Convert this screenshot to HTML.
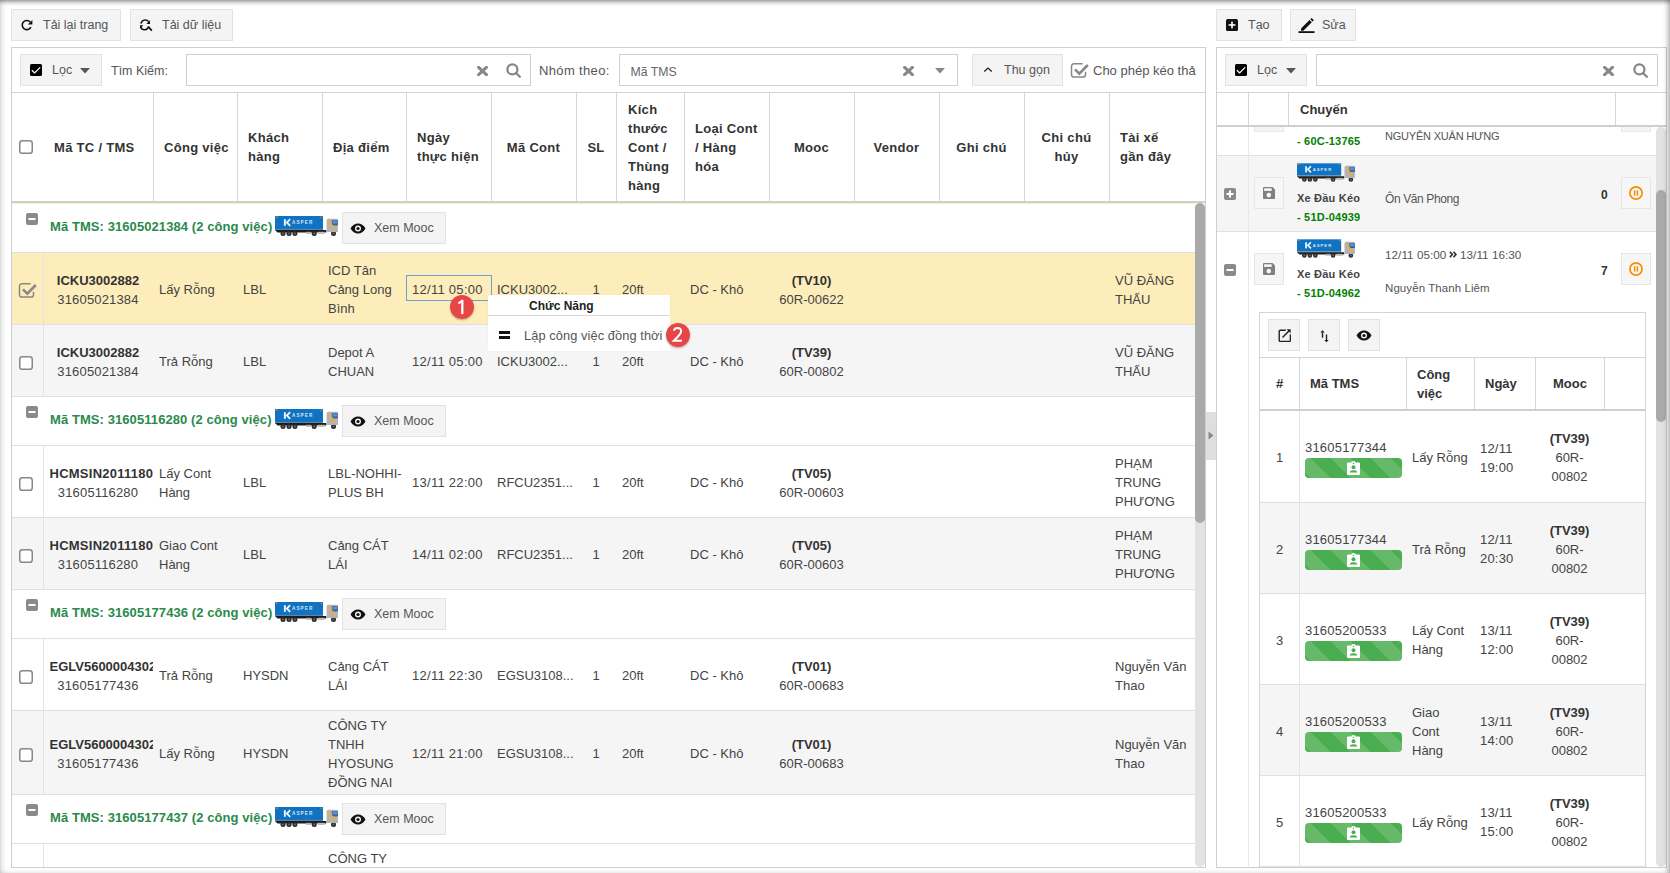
<!DOCTYPE html>
<html><head><meta charset="utf-8"><style>
html,body{margin:0;padding:0;}
body{width:1670px;height:873px;overflow:hidden;position:relative;background:#fff;font-family:"Liberation Sans", sans-serif;}
.t{position:absolute;white-space:nowrap;}
.b{position:absolute;}
</style></head><body>
<div class="b" style="left:11px;top:9px;width:110px;height:32px;background:#f4f4f4;border:1px solid #e2e2e2;box-sizing:border-box;"></div><svg class="b" style="left:21px;top:19px" width="13" height="13" viewBox="0 0 13 13"><path d="M9.9 8.2A4.6 4.6 0 1 1 9.2 2.9" fill="none" stroke="#111" stroke-width="1.6"/><path d="M11.4 1v4.6H6.8z" fill="#111"/></svg><div class="t" style="left:43px;top:15.5px;font-size:12.5px;line-height:19px;color:#555;">Tải lại trang</div><div class="b" style="left:130px;top:9px;width:103px;height:32px;background:#f4f4f4;border:1px solid #e2e2e2;box-sizing:border-box;"></div><svg class="b" style="left:139px;top:19px" width="14" height="13" viewBox="0 0 14 13"><path d="M2 4.6A4.3 4.3 0 0 1 9.6 2.6" fill="none" stroke="#111" stroke-width="1.5"/><path d="M11 1.2V5H7.3z" fill="#111"/><path d="M1 6.3h3.4L1 9.8z" fill="#111"/><path d="M1.8 8.4A4 4 0 0 0 9.4 7.6" fill="none" stroke="#111" stroke-width="1.5"/><path d="M9.2 7.6l3.6 4" stroke="#111" stroke-width="1.7"/></svg><div class="t" style="left:162px;top:15.5px;font-size:12.5px;line-height:19px;color:#555;">Tải dữ liệu</div><div class="b" style="left:1216px;top:9px;width:66px;height:32px;background:#f4f4f4;border:1px solid #e2e2e2;box-sizing:border-box;"></div><svg class="b" style="left:1226px;top:19px" width="12" height="12" viewBox="0 0 12 12"><rect x="0" y="0" width="12" height="12" rx="1.5" fill="#111"/><rect x="2.6" y="5.2" width="6.8" height="1.6" fill="#fff"/><rect x="5.2" y="2.6" width="1.6" height="6.8" fill="#fff"/></svg><div class="t" style="left:1248px;top:15.5px;font-size:12.5px;line-height:19px;color:#555;">Tạo</div><div class="b" style="left:1290px;top:9px;width:66px;height:32px;background:#f4f4f4;border:1px solid #e2e2e2;box-sizing:border-box;"></div><svg class="b" style="left:1298px;top:17px" width="17" height="16" viewBox="0 0 17 16"><path d="M3 11.5l8.5-8.5 2.3 2.3-8.5 8.5H3z" fill="#111"/><path d="M12.3 2.2l1.3-1.3 2.3 2.3-1.3 1.3z" fill="#111"/><rect x="0.5" y="14.2" width="16" height="1.8" fill="#111"/></svg><div class="t" style="left:1322px;top:15.5px;font-size:12.5px;line-height:19px;color:#555;">Sửa</div><div class="b" style="left:11px;top:47px;width:1195px;height:821px;border:1px solid #cfcfcf;box-sizing:border-box;background:#fff"></div><div class="b" style="left:20px;top:54px;width:82px;height:32px;background:#f4f4f4;border:1px solid #e2e2e2;box-sizing:border-box;"></div><svg class="b" style="left:30px;top:64px" width="12" height="12" viewBox="0 0 12 12"><rect x="0" y="0" width="12" height="12" rx="1.5" fill="#000"/><path d="M1.8 6.2L4.6 8.9L10.2 3.4" fill="none" stroke="#fff" stroke-width="1.3"/></svg><div class="t" style="left:52px;top:60.5px;font-size:12.5px;line-height:19px;color:#555;">Lọc</div><svg class="b" style="left:80px;top:68px" width="10" height="6" viewBox="0 0 10 6"><path d="M0 0h10L5 5.5z" fill="#555"/></svg><div class="t" style="left:111px;top:61.5px;font-size:12.5px;line-height:19px;color:#555;">Tìm Kiếm:</div><div class="b" style="left:186px;top:54px;width:345px;height:32px;border:1px solid #cfcfcf;box-sizing:border-box;background:#fff"></div><svg class="b" style="left:477px;top:66px" width="11" height="10" viewBox="0 0 11 10"><path d="M1.6 1.4l7.8 7.2M9.4 1.4l-7.8 7.2" stroke="#888" stroke-width="3.1" stroke-linecap="round"/></svg><svg class="b" style="left:506px;top:63px" width="15" height="15" viewBox="0 0 15 15"><circle cx="6.4" cy="6.4" r="5" fill="none" stroke="#888" stroke-width="2.3"/><path d="M10 10l3.8 3.8" stroke="#888" stroke-width="2.3" stroke-linecap="round"/></svg><div class="t" style="left:539px;top:60.5px;font-size:13px;line-height:19px;color:#555;letter-spacing:0.35px;">Nhóm theo:</div><div class="b" style="left:619px;top:54px;width:339px;height:32px;border:1px solid #cfcfcf;box-sizing:border-box;background:#fff"></div><div class="t" style="left:630.5px;top:62.5px;font-size:12.3px;line-height:19px;color:#666;">Mã TMS</div><svg class="b" style="left:903px;top:66px" width="11" height="10" viewBox="0 0 11 10"><path d="M1.6 1.4l7.8 7.2M9.4 1.4l-7.8 7.2" stroke="#888" stroke-width="3.1" stroke-linecap="round"/></svg><svg class="b" style="left:935px;top:68px" width="10" height="6" viewBox="0 0 10 6"><path d="M0 0h10L5 5.5z" fill="#888"/></svg><div class="b" style="left:972px;top:54px;width:91px;height:32px;background:#f4f4f4;border:1px solid #e2e2e2;box-sizing:border-box;"></div><svg class="b" style="left:983px;top:66px" width="10" height="7" viewBox="0 0 10 7"><path d="M1.3 5.5L5 2.1L8.7 5.5" fill="none" stroke="#222" stroke-width="1.35"/></svg><div class="t" style="left:1004px;top:60.5px;font-size:12.5px;line-height:19px;color:#555;">Thu gọn</div><svg class="b" style="left:1070px;top:62px" width="20" height="16" viewBox="0 0 20 16"><path d="M12.6 1.85H3.9a2.4 2.4 0 0 0-2.4 2.4v8.4a2.4 2.4 0 0 0 2.4 2.4h9.2a2.4 2.4 0 0 0 2.4-2.4V9.8" fill="none" stroke="#888" stroke-width="1.5"/><path d="M5 7.4L9.3 11.6L17.8 3" fill="none" stroke="#888" stroke-width="2.6"/></svg><div class="t" style="left:1093px;top:60.5px;font-size:13px;line-height:19px;color:#555;">Cho phép kéo thả</div><div class="b" style="left:12px;top:92px;width:1193px;height:1px;background:#d4d4d4"></div><div class="b" style="left:153px;top:93px;width:1px;height:108px;background:#d6d6d6"></div><div class="b" style="left:237px;top:93px;width:1px;height:108px;background:#d6d6d6"></div><div class="b" style="left:322px;top:93px;width:1px;height:108px;background:#d6d6d6"></div><div class="b" style="left:406px;top:93px;width:1px;height:108px;background:#d6d6d6"></div><div class="b" style="left:491px;top:93px;width:1px;height:108px;background:#d6d6d6"></div><div class="b" style="left:576px;top:93px;width:1px;height:108px;background:#d6d6d6"></div><div class="b" style="left:616px;top:93px;width:1px;height:108px;background:#d6d6d6"></div><div class="b" style="left:684px;top:93px;width:1px;height:108px;background:#d6d6d6"></div><div class="b" style="left:769px;top:93px;width:1px;height:108px;background:#d6d6d6"></div><div class="b" style="left:854px;top:93px;width:1px;height:108px;background:#d6d6d6"></div><div class="b" style="left:939px;top:93px;width:1px;height:108px;background:#d6d6d6"></div><div class="b" style="left:1024px;top:93px;width:1px;height:108px;background:#d6d6d6"></div><div class="b" style="left:1109px;top:93px;width:1px;height:108px;background:#d6d6d6"></div><div class="b" style="left:12px;top:201px;width:1193px;height:2px;background:#cfcfcf"></div><div class="b" style="left:12px;top:203px;width:1183px;height:1px;background:#fbeebf"></div><svg class="b" style="left:19px;top:140px" width="14" height="14" viewBox="0 0 14 14"><rect x="0.75" y="0.75" width="12.5" height="12.5" rx="2.6" fill="#fff" stroke="#888" stroke-width="1.5"/></svg><div class="t" style="left:54px;top:137.5px;font-size:13px;line-height:19px;color:#333;font-weight:bold;letter-spacing:0.3px;">Mã TC / TMS</div><div class="t" style="left:164px;top:137.5px;font-size:13px;line-height:19px;color:#333;font-weight:bold;letter-spacing:0.3px;">Công việc</div><div class="t" style="left:248px;top:127.5px;font-size:13px;line-height:19px;color:#333;font-weight:bold;letter-spacing:0.3px;">Khách</div><div class="t" style="left:248px;top:146.5px;font-size:13px;line-height:19px;color:#333;font-weight:bold;letter-spacing:0.3px;">hàng</div><div class="t" style="left:333px;top:137.5px;font-size:13px;line-height:19px;color:#333;font-weight:bold;letter-spacing:0.3px;">Địa điểm</div><div class="t" style="left:417px;top:127.5px;font-size:13px;line-height:19px;color:#333;font-weight:bold;letter-spacing:0.3px;">Ngày</div><div class="t" style="left:417px;top:146.5px;font-size:13px;line-height:19px;color:#333;font-weight:bold;letter-spacing:0.3px;">thực hiện</div><div class="t" style="left:491px;width:85px;text-align:center;top:137.5px;font-size:13px;line-height:19px;color:#333;font-weight:bold;letter-spacing:0.3px;">Mã Cont</div><div class="t" style="left:576px;width:40px;text-align:center;top:137.5px;font-size:13px;line-height:19px;color:#333;font-weight:bold;letter-spacing:0.3px;">SL</div><div class="t" style="left:628px;top:99.5px;font-size:13px;line-height:19px;color:#333;font-weight:bold;letter-spacing:0.3px;">Kích</div><div class="t" style="left:628px;top:118.5px;font-size:13px;line-height:19px;color:#333;font-weight:bold;letter-spacing:0.3px;">thước</div><div class="t" style="left:628px;top:137.5px;font-size:13px;line-height:19px;color:#333;font-weight:bold;letter-spacing:0.3px;">Cont /</div><div class="t" style="left:628px;top:156.5px;font-size:13px;line-height:19px;color:#333;font-weight:bold;letter-spacing:0.3px;">Thùng</div><div class="t" style="left:628px;top:175.5px;font-size:13px;line-height:19px;color:#333;font-weight:bold;letter-spacing:0.3px;">hàng</div><div class="t" style="left:695px;top:118.5px;font-size:13px;line-height:19px;color:#333;font-weight:bold;letter-spacing:0.3px;">Loại Cont</div><div class="t" style="left:695px;top:137.5px;font-size:13px;line-height:19px;color:#333;font-weight:bold;letter-spacing:0.3px;">/ Hàng</div><div class="t" style="left:695px;top:156.5px;font-size:13px;line-height:19px;color:#333;font-weight:bold;letter-spacing:0.3px;">hóa</div><div class="t" style="left:769px;width:85px;text-align:center;top:137.5px;font-size:13px;line-height:19px;color:#333;font-weight:bold;letter-spacing:0.3px;">Mooc</div><div class="t" style="left:854px;width:85px;text-align:center;top:137.5px;font-size:13px;line-height:19px;color:#333;font-weight:bold;letter-spacing:0.3px;">Vendor</div><div class="t" style="left:939px;width:85px;text-align:center;top:137.5px;font-size:13px;line-height:19px;color:#333;font-weight:bold;letter-spacing:0.3px;">Ghi chú</div><div class="t" style="left:1024px;width:85px;text-align:center;top:127.5px;font-size:13px;line-height:19px;color:#333;font-weight:bold;letter-spacing:0.3px;">Chi chú</div><div class="t" style="left:1024px;width:85px;text-align:center;top:146.5px;font-size:13px;line-height:19px;color:#333;font-weight:bold;letter-spacing:0.3px;">hủy</div><div class="t" style="left:1120px;top:127.5px;font-size:13px;line-height:19px;color:#333;font-weight:bold;letter-spacing:0.3px;">Tài xế</div><div class="t" style="left:1120px;top:146.5px;font-size:13px;line-height:19px;color:#333;font-weight:bold;letter-spacing:0.3px;">gần đây</div><svg class="b" style="left:26px;top:213px" width="12" height="12" viewBox="0 0 12 12"><rect x="0" y="0" width="12" height="12" rx="2" fill="#8a8a8a"/><rect x="2.5" y="5" width="7" height="2" fill="#fff"/></svg><div class="t" style="left:50px;top:216.5px;font-size:13px;line-height:19px;color:#2a8a4c;font-weight:bold;letter-spacing:0.08px;">Mã TMS: 31605021384 (2 công việc)</div><svg class="b" style="left:275px;top:216px" width="63" height="21" viewBox="0 0 63 21">
<rect x="0" y="0" width="48" height="13" fill="#0f72c3"/>
<rect x="0" y="12.9" width="48" height="1.3" fill="#5a86ae"/>
<rect x="0.8" y="0.6" width="1.8" height="1.2" fill="#b8a040"/><rect x="45.4" y="0.6" width="1.8" height="1.2" fill="#8aa040"/>
<path d="M40 2L34 12.5" stroke="#6aa060" stroke-width="0.35" opacity="0.6"/>
<rect x="8.9" y="3.2" width="1.9" height="6.6" fill="#f2f7fc"/>
<path d="M15.2 3.2L11.8 6.5L15.2 9.8" fill="none" stroke="#f2f7fc" stroke-width="1.8"/>
<text x="17" y="7.9" font-family="Liberation Sans" font-size="4.6" font-weight="bold" fill="#d6e6f5" letter-spacing="1.1">ASPER</text>
<path d="M0 14.1h51.3v2.3H2.5z" fill="#1c1c1c"/>
<rect x="31" y="15.8" width="5" height="2" fill="#b0b0b0"/>
<rect x="42.8" y="15.8" width="7" height="2.2" fill="#c0c0c0"/>
<g fill="#2b2b2b"><circle cx="8" cy="17.6" r="2.5"/><circle cx="14" cy="17.6" r="2.5"/><circle cx="19.9" cy="17.6" r="2.5"/><circle cx="39.2" cy="17.6" r="2.5"/><circle cx="58.5" cy="17.6" r="2.5"/></g>
<g fill="#6a6a6a"><circle cx="8" cy="17.6" r="1"/><circle cx="14" cy="17.6" r="1"/><circle cx="19.9" cy="17.6" r="1"/><circle cx="39.2" cy="17.6" r="1"/><circle cx="58.5" cy="17.6" r="1"/></g>
<path d="M51.6 4.5q0-1.8 1.8-1.8h8.3q1.2 0 1.2 1.2v12h-11.3z" fill="#b3b3b3"/>
<path d="M56.8 4.2h6v5.2h-6z" fill="#2f5fb0"/>
<path d="M57.5 4.8h4.5v2.8h-4.5z" fill="#5a8ed8"/>
<path d="M54.2 4.5q1.5 4 5.8 8.3" fill="none" stroke="#f0b020" stroke-width="1.7"/>
</svg><div class="b" style="left:342px;top:212px;width:104px;height:32px;background:#f4f4f4;border:1px solid #e2e2e2;box-sizing:border-box;"></div><svg class="b" style="left:350px;top:223px" width="16" height="11" viewBox="0 0 16 11"><path d="M0.5 5.5C2.5 2 5 0.5 8 0.5s5.5 1.5 7.5 5c-2 3.5-4.5 5-7.5 5S2.5 9 0.5 5.5z" fill="#111"/><circle cx="8" cy="5.5" r="3" fill="#f4f4f4"/><circle cx="8" cy="5.5" r="1.6" fill="#111"/></svg><div class="t" style="left:374px;top:218.5px;font-size:12.5px;line-height:19px;color:#555;">Xem Mooc</div><div class="b" style="left:12px;top:252px;width:1183px;height:1px;background:#e0e0e0"></div><div class="b" style="left:12px;top:253px;width:1183px;height:71px;background:#fdedbb"></div><div class="b" style="left:43px;top:253px;width:1px;height:71px;background:#e4e4e4"></div><svg class="b" style="left:17.5px;top:281.5px" width="20" height="16" viewBox="0 0 20 16"><path d="M12.6 1.85H3.9a2.4 2.4 0 0 0-2.4 2.4v8.4a2.4 2.4 0 0 0 2.4 2.4h9.2a2.4 2.4 0 0 0 2.4-2.4V9.8" fill="none" stroke="#888" stroke-width="1.5"/><path d="M5 7.4L9.3 11.6L17.8 3" fill="none" stroke="#888" stroke-width="2.6"/></svg><div class="t" style="left:43px;width:110px;text-align:center;top:270.5px;font-size:13px;line-height:19px;color:#333;font-weight:bold;">ICKU3002882</div><div class="t" style="left:43px;width:110px;text-align:center;top:289.5px;font-size:13px;line-height:19px;color:#444;letter-spacing:0.16px;">31605021384</div><div class="t" style="left:159px;top:280.0px;font-size:13px;line-height:19px;color:#444;">Lấy Rỗng</div><div class="t" style="left:243px;top:280.0px;font-size:13px;line-height:19px;color:#444;">LBL</div><div class="t" style="left:328px;top:261.0px;font-size:13px;line-height:19px;color:#444;">ICD Tân</div><div class="t" style="left:328px;top:280.0px;font-size:13px;line-height:19px;color:#444;">Cảng Long</div><div class="t" style="left:328px;top:299.0px;font-size:13px;line-height:19px;color:#444;">Bình</div><div class="t" style="left:412px;top:280.0px;font-size:13px;line-height:19px;color:#444;letter-spacing:0.28px;">12/11 05:00</div><div class="t" style="left:497px;top:280.0px;font-size:13px;line-height:19px;color:#444;">ICKU3002...</div><div class="t" style="left:576px;width:40px;text-align:center;top:280.0px;font-size:13px;line-height:19px;color:#444;">1</div><div class="t" style="left:622px;top:280.0px;font-size:13px;line-height:19px;color:#444;">20ft</div><div class="t" style="left:690px;top:280.0px;font-size:13px;line-height:19px;color:#444;">DC - Khô</div><div class="t" style="left:769px;width:85px;text-align:center;top:270.5px;font-size:13px;line-height:19px;color:#333;font-weight:bold;">(TV10)</div><div class="t" style="left:769px;width:85px;text-align:center;top:289.5px;font-size:13px;line-height:19px;color:#444;">60R-00622</div><div class="t" style="left:1115px;top:270.5px;font-size:13px;line-height:19px;color:#444;">VŨ ĐĂNG</div><div class="t" style="left:1115px;top:289.5px;font-size:13px;line-height:19px;color:#444;">THẤU</div><div class="b" style="left:12px;top:324px;width:1183px;height:1px;background:#e0e0e0"></div><div class="b" style="left:12px;top:325px;width:1183px;height:71px;background:#f5f5f5"></div><div class="b" style="left:43px;top:325px;width:1px;height:71px;background:#e4e4e4"></div><svg class="b" style="left:19px;top:355.5px" width="14" height="14" viewBox="0 0 14 14"><rect x="0.75" y="0.75" width="12.5" height="12.5" rx="2.6" fill="#fff" stroke="#888" stroke-width="1.5"/></svg><div class="t" style="left:43px;width:110px;text-align:center;top:342.5px;font-size:13px;line-height:19px;color:#333;font-weight:bold;">ICKU3002882</div><div class="t" style="left:43px;width:110px;text-align:center;top:361.5px;font-size:13px;line-height:19px;color:#444;letter-spacing:0.16px;">31605021384</div><div class="t" style="left:159px;top:352.0px;font-size:13px;line-height:19px;color:#444;">Trả Rỗng</div><div class="t" style="left:243px;top:352.0px;font-size:13px;line-height:19px;color:#444;">LBL</div><div class="t" style="left:328px;top:342.5px;font-size:13px;line-height:19px;color:#444;">Depot A</div><div class="t" style="left:328px;top:361.5px;font-size:13px;line-height:19px;color:#444;">CHUAN</div><div class="t" style="left:412px;top:352.0px;font-size:13px;line-height:19px;color:#444;letter-spacing:0.28px;">12/11 05:00</div><div class="t" style="left:497px;top:352.0px;font-size:13px;line-height:19px;color:#444;">ICKU3002...</div><div class="t" style="left:576px;width:40px;text-align:center;top:352.0px;font-size:13px;line-height:19px;color:#444;">1</div><div class="t" style="left:622px;top:352.0px;font-size:13px;line-height:19px;color:#444;">20ft</div><div class="t" style="left:690px;top:352.0px;font-size:13px;line-height:19px;color:#444;">DC - Khô</div><div class="t" style="left:769px;width:85px;text-align:center;top:342.5px;font-size:13px;line-height:19px;color:#333;font-weight:bold;">(TV39)</div><div class="t" style="left:769px;width:85px;text-align:center;top:361.5px;font-size:13px;line-height:19px;color:#444;">60R-00802</div><div class="t" style="left:1115px;top:342.5px;font-size:13px;line-height:19px;color:#444;">VŨ ĐĂNG</div><div class="t" style="left:1115px;top:361.5px;font-size:13px;line-height:19px;color:#444;">THẤU</div><div class="b" style="left:12px;top:396px;width:1183px;height:1px;background:#e0e0e0"></div><svg class="b" style="left:26px;top:406px" width="12" height="12" viewBox="0 0 12 12"><rect x="0" y="0" width="12" height="12" rx="2" fill="#8a8a8a"/><rect x="2.5" y="5" width="7" height="2" fill="#fff"/></svg><div class="t" style="left:50px;top:409.5px;font-size:13px;line-height:19px;color:#2a8a4c;font-weight:bold;letter-spacing:0.08px;">Mã TMS: 31605116280 (2 công việc)</div><svg class="b" style="left:275px;top:409px" width="63" height="21" viewBox="0 0 63 21">
<rect x="0" y="0" width="48" height="13" fill="#0f72c3"/>
<rect x="0" y="12.9" width="48" height="1.3" fill="#5a86ae"/>
<rect x="0.8" y="0.6" width="1.8" height="1.2" fill="#b8a040"/><rect x="45.4" y="0.6" width="1.8" height="1.2" fill="#8aa040"/>
<path d="M40 2L34 12.5" stroke="#6aa060" stroke-width="0.35" opacity="0.6"/>
<rect x="8.9" y="3.2" width="1.9" height="6.6" fill="#f2f7fc"/>
<path d="M15.2 3.2L11.8 6.5L15.2 9.8" fill="none" stroke="#f2f7fc" stroke-width="1.8"/>
<text x="17" y="7.9" font-family="Liberation Sans" font-size="4.6" font-weight="bold" fill="#d6e6f5" letter-spacing="1.1">ASPER</text>
<path d="M0 14.1h51.3v2.3H2.5z" fill="#1c1c1c"/>
<rect x="31" y="15.8" width="5" height="2" fill="#b0b0b0"/>
<rect x="42.8" y="15.8" width="7" height="2.2" fill="#c0c0c0"/>
<g fill="#2b2b2b"><circle cx="8" cy="17.6" r="2.5"/><circle cx="14" cy="17.6" r="2.5"/><circle cx="19.9" cy="17.6" r="2.5"/><circle cx="39.2" cy="17.6" r="2.5"/><circle cx="58.5" cy="17.6" r="2.5"/></g>
<g fill="#6a6a6a"><circle cx="8" cy="17.6" r="1"/><circle cx="14" cy="17.6" r="1"/><circle cx="19.9" cy="17.6" r="1"/><circle cx="39.2" cy="17.6" r="1"/><circle cx="58.5" cy="17.6" r="1"/></g>
<path d="M51.6 4.5q0-1.8 1.8-1.8h8.3q1.2 0 1.2 1.2v12h-11.3z" fill="#b3b3b3"/>
<path d="M56.8 4.2h6v5.2h-6z" fill="#2f5fb0"/>
<path d="M57.5 4.8h4.5v2.8h-4.5z" fill="#5a8ed8"/>
<path d="M54.2 4.5q1.5 4 5.8 8.3" fill="none" stroke="#f0b020" stroke-width="1.7"/>
</svg><div class="b" style="left:342px;top:405px;width:104px;height:32px;background:#f4f4f4;border:1px solid #e2e2e2;box-sizing:border-box;"></div><svg class="b" style="left:350px;top:416px" width="16" height="11" viewBox="0 0 16 11"><path d="M0.5 5.5C2.5 2 5 0.5 8 0.5s5.5 1.5 7.5 5c-2 3.5-4.5 5-7.5 5S2.5 9 0.5 5.5z" fill="#111"/><circle cx="8" cy="5.5" r="3" fill="#f4f4f4"/><circle cx="8" cy="5.5" r="1.6" fill="#111"/></svg><div class="t" style="left:374px;top:411.5px;font-size:12.5px;line-height:19px;color:#555;">Xem Mooc</div><div class="b" style="left:12px;top:445px;width:1183px;height:1px;background:#e0e0e0"></div><div class="b" style="left:12px;top:446px;width:1183px;height:71px;background:#fff"></div><div class="b" style="left:43px;top:446px;width:1px;height:71px;background:#e4e4e4"></div><svg class="b" style="left:19px;top:476.5px" width="14" height="14" viewBox="0 0 14 14"><rect x="0.75" y="0.75" width="12.5" height="12.5" rx="2.6" fill="#fff" stroke="#888" stroke-width="1.5"/></svg><div class="b" style="left:49px;top:463.5px;width:104px;height:19px;overflow:hidden"><div class="t" style="left:0.5px;top:0;font-size:13px;line-height:19px;font-weight:bold;color:#333;letter-spacing:0.25px">HCMSIN2011180</div></div><div class="t" style="left:43px;width:110px;text-align:center;top:482.5px;font-size:13px;line-height:19px;color:#444;letter-spacing:0.16px;">31605116280</div><div class="t" style="left:159px;top:463.5px;font-size:13px;line-height:19px;color:#444;">Lấy Cont</div><div class="t" style="left:159px;top:482.5px;font-size:13px;line-height:19px;color:#444;">Hàng</div><div class="t" style="left:243px;top:473.0px;font-size:13px;line-height:19px;color:#444;">LBL</div><div class="t" style="left:328px;top:463.5px;font-size:13px;line-height:19px;color:#444;">LBL-NOHHI-</div><div class="t" style="left:328px;top:482.5px;font-size:13px;line-height:19px;color:#444;">PLUS BH</div><div class="t" style="left:412px;top:473.0px;font-size:13px;line-height:19px;color:#444;letter-spacing:0.28px;">13/11 22:00</div><div class="t" style="left:497px;top:473.0px;font-size:13px;line-height:19px;color:#444;">RFCU2351...</div><div class="t" style="left:576px;width:40px;text-align:center;top:473.0px;font-size:13px;line-height:19px;color:#444;">1</div><div class="t" style="left:622px;top:473.0px;font-size:13px;line-height:19px;color:#444;">20ft</div><div class="t" style="left:690px;top:473.0px;font-size:13px;line-height:19px;color:#444;">DC - Khô</div><div class="t" style="left:769px;width:85px;text-align:center;top:463.5px;font-size:13px;line-height:19px;color:#333;font-weight:bold;">(TV05)</div><div class="t" style="left:769px;width:85px;text-align:center;top:482.5px;font-size:13px;line-height:19px;color:#444;">60R-00603</div><div class="t" style="left:1115px;top:454.0px;font-size:13px;line-height:19px;color:#444;">PHẠM</div><div class="t" style="left:1115px;top:473.0px;font-size:13px;line-height:19px;color:#444;">TRUNG</div><div class="t" style="left:1115px;top:492.0px;font-size:13px;line-height:19px;color:#444;">PHƯƠNG</div><div class="b" style="left:12px;top:517px;width:1183px;height:1px;background:#e0e0e0"></div><div class="b" style="left:12px;top:518px;width:1183px;height:71px;background:#f5f5f5"></div><div class="b" style="left:43px;top:518px;width:1px;height:71px;background:#e4e4e4"></div><svg class="b" style="left:19px;top:548.5px" width="14" height="14" viewBox="0 0 14 14"><rect x="0.75" y="0.75" width="12.5" height="12.5" rx="2.6" fill="#fff" stroke="#888" stroke-width="1.5"/></svg><div class="b" style="left:49px;top:535.5px;width:104px;height:19px;overflow:hidden"><div class="t" style="left:0.5px;top:0;font-size:13px;line-height:19px;font-weight:bold;color:#333;letter-spacing:0.25px">HCMSIN2011180</div></div><div class="t" style="left:43px;width:110px;text-align:center;top:554.5px;font-size:13px;line-height:19px;color:#444;letter-spacing:0.16px;">31605116280</div><div class="t" style="left:159px;top:535.5px;font-size:13px;line-height:19px;color:#444;">Giao Cont</div><div class="t" style="left:159px;top:554.5px;font-size:13px;line-height:19px;color:#444;">Hàng</div><div class="t" style="left:243px;top:545.0px;font-size:13px;line-height:19px;color:#444;">LBL</div><div class="t" style="left:328px;top:535.5px;font-size:13px;line-height:19px;color:#444;">Cảng CÁT</div><div class="t" style="left:328px;top:554.5px;font-size:13px;line-height:19px;color:#444;">LÁI</div><div class="t" style="left:412px;top:545.0px;font-size:13px;line-height:19px;color:#444;letter-spacing:0.28px;">14/11 02:00</div><div class="t" style="left:497px;top:545.0px;font-size:13px;line-height:19px;color:#444;">RFCU2351...</div><div class="t" style="left:576px;width:40px;text-align:center;top:545.0px;font-size:13px;line-height:19px;color:#444;">1</div><div class="t" style="left:622px;top:545.0px;font-size:13px;line-height:19px;color:#444;">20ft</div><div class="t" style="left:690px;top:545.0px;font-size:13px;line-height:19px;color:#444;">DC - Khô</div><div class="t" style="left:769px;width:85px;text-align:center;top:535.5px;font-size:13px;line-height:19px;color:#333;font-weight:bold;">(TV05)</div><div class="t" style="left:769px;width:85px;text-align:center;top:554.5px;font-size:13px;line-height:19px;color:#444;">60R-00603</div><div class="t" style="left:1115px;top:526.0px;font-size:13px;line-height:19px;color:#444;">PHẠM</div><div class="t" style="left:1115px;top:545.0px;font-size:13px;line-height:19px;color:#444;">TRUNG</div><div class="t" style="left:1115px;top:564.0px;font-size:13px;line-height:19px;color:#444;">PHƯƠNG</div><div class="b" style="left:12px;top:589px;width:1183px;height:1px;background:#e0e0e0"></div><svg class="b" style="left:26px;top:599px" width="12" height="12" viewBox="0 0 12 12"><rect x="0" y="0" width="12" height="12" rx="2" fill="#8a8a8a"/><rect x="2.5" y="5" width="7" height="2" fill="#fff"/></svg><div class="t" style="left:50px;top:602.5px;font-size:13px;line-height:19px;color:#2a8a4c;font-weight:bold;letter-spacing:0.08px;">Mã TMS: 31605177436 (2 công việc)</div><svg class="b" style="left:275px;top:602px" width="63" height="21" viewBox="0 0 63 21">
<rect x="0" y="0" width="48" height="13" fill="#0f72c3"/>
<rect x="0" y="12.9" width="48" height="1.3" fill="#5a86ae"/>
<rect x="0.8" y="0.6" width="1.8" height="1.2" fill="#b8a040"/><rect x="45.4" y="0.6" width="1.8" height="1.2" fill="#8aa040"/>
<path d="M40 2L34 12.5" stroke="#6aa060" stroke-width="0.35" opacity="0.6"/>
<rect x="8.9" y="3.2" width="1.9" height="6.6" fill="#f2f7fc"/>
<path d="M15.2 3.2L11.8 6.5L15.2 9.8" fill="none" stroke="#f2f7fc" stroke-width="1.8"/>
<text x="17" y="7.9" font-family="Liberation Sans" font-size="4.6" font-weight="bold" fill="#d6e6f5" letter-spacing="1.1">ASPER</text>
<path d="M0 14.1h51.3v2.3H2.5z" fill="#1c1c1c"/>
<rect x="31" y="15.8" width="5" height="2" fill="#b0b0b0"/>
<rect x="42.8" y="15.8" width="7" height="2.2" fill="#c0c0c0"/>
<g fill="#2b2b2b"><circle cx="8" cy="17.6" r="2.5"/><circle cx="14" cy="17.6" r="2.5"/><circle cx="19.9" cy="17.6" r="2.5"/><circle cx="39.2" cy="17.6" r="2.5"/><circle cx="58.5" cy="17.6" r="2.5"/></g>
<g fill="#6a6a6a"><circle cx="8" cy="17.6" r="1"/><circle cx="14" cy="17.6" r="1"/><circle cx="19.9" cy="17.6" r="1"/><circle cx="39.2" cy="17.6" r="1"/><circle cx="58.5" cy="17.6" r="1"/></g>
<path d="M51.6 4.5q0-1.8 1.8-1.8h8.3q1.2 0 1.2 1.2v12h-11.3z" fill="#b3b3b3"/>
<path d="M56.8 4.2h6v5.2h-6z" fill="#2f5fb0"/>
<path d="M57.5 4.8h4.5v2.8h-4.5z" fill="#5a8ed8"/>
<path d="M54.2 4.5q1.5 4 5.8 8.3" fill="none" stroke="#f0b020" stroke-width="1.7"/>
</svg><div class="b" style="left:342px;top:598px;width:104px;height:32px;background:#f4f4f4;border:1px solid #e2e2e2;box-sizing:border-box;"></div><svg class="b" style="left:350px;top:609px" width="16" height="11" viewBox="0 0 16 11"><path d="M0.5 5.5C2.5 2 5 0.5 8 0.5s5.5 1.5 7.5 5c-2 3.5-4.5 5-7.5 5S2.5 9 0.5 5.5z" fill="#111"/><circle cx="8" cy="5.5" r="3" fill="#f4f4f4"/><circle cx="8" cy="5.5" r="1.6" fill="#111"/></svg><div class="t" style="left:374px;top:604.5px;font-size:12.5px;line-height:19px;color:#555;">Xem Mooc</div><div class="b" style="left:12px;top:638px;width:1183px;height:1px;background:#e0e0e0"></div><div class="b" style="left:12px;top:639px;width:1183px;height:71px;background:#fff"></div><div class="b" style="left:43px;top:639px;width:1px;height:71px;background:#e4e4e4"></div><svg class="b" style="left:19px;top:669.5px" width="14" height="14" viewBox="0 0 14 14"><rect x="0.75" y="0.75" width="12.5" height="12.5" rx="2.6" fill="#fff" stroke="#888" stroke-width="1.5"/></svg><div class="b" style="left:49px;top:656.5px;width:104px;height:19px;overflow:hidden"><div class="t" style="left:0.5px;top:0;font-size:13px;line-height:19px;font-weight:bold;color:#333;letter-spacing:0px">EGLV5600004302</div></div><div class="t" style="left:43px;width:110px;text-align:center;top:675.5px;font-size:13px;line-height:19px;color:#444;letter-spacing:0.16px;">31605177436</div><div class="t" style="left:159px;top:666.0px;font-size:13px;line-height:19px;color:#444;">Trả Rỗng</div><div class="t" style="left:243px;top:666.0px;font-size:13px;line-height:19px;color:#444;">HYSDN</div><div class="t" style="left:328px;top:656.5px;font-size:13px;line-height:19px;color:#444;">Cảng CÁT</div><div class="t" style="left:328px;top:675.5px;font-size:13px;line-height:19px;color:#444;">LÁI</div><div class="t" style="left:412px;top:666.0px;font-size:13px;line-height:19px;color:#444;letter-spacing:0.28px;">12/11 22:30</div><div class="t" style="left:497px;top:666.0px;font-size:13px;line-height:19px;color:#444;">EGSU3108...</div><div class="t" style="left:576px;width:40px;text-align:center;top:666.0px;font-size:13px;line-height:19px;color:#444;">1</div><div class="t" style="left:622px;top:666.0px;font-size:13px;line-height:19px;color:#444;">20ft</div><div class="t" style="left:690px;top:666.0px;font-size:13px;line-height:19px;color:#444;">DC - Khô</div><div class="t" style="left:769px;width:85px;text-align:center;top:656.5px;font-size:13px;line-height:19px;color:#333;font-weight:bold;">(TV01)</div><div class="t" style="left:769px;width:85px;text-align:center;top:675.5px;font-size:13px;line-height:19px;color:#444;">60R-00683</div><div class="t" style="left:1115px;top:656.5px;font-size:13px;line-height:19px;color:#444;">Nguyễn Văn</div><div class="t" style="left:1115px;top:675.5px;font-size:13px;line-height:19px;color:#444;">Thao</div><div class="b" style="left:12px;top:710px;width:1183px;height:1px;background:#e0e0e0"></div><div class="b" style="left:12px;top:711px;width:1183px;height:83px;background:#f5f5f5"></div><div class="b" style="left:43px;top:711px;width:1px;height:83px;background:#e4e4e4"></div><svg class="b" style="left:19px;top:747.5px" width="14" height="14" viewBox="0 0 14 14"><rect x="0.75" y="0.75" width="12.5" height="12.5" rx="2.6" fill="#fff" stroke="#888" stroke-width="1.5"/></svg><div class="b" style="left:49px;top:734.5px;width:104px;height:19px;overflow:hidden"><div class="t" style="left:0.5px;top:0;font-size:13px;line-height:19px;font-weight:bold;color:#333;letter-spacing:0px">EGLV5600004302</div></div><div class="t" style="left:43px;width:110px;text-align:center;top:753.5px;font-size:13px;line-height:19px;color:#444;letter-spacing:0.16px;">31605177436</div><div class="t" style="left:159px;top:744.0px;font-size:13px;line-height:19px;color:#444;">Lấy Rỗng</div><div class="t" style="left:243px;top:744.0px;font-size:13px;line-height:19px;color:#444;">HYSDN</div><div class="t" style="left:328px;top:715.5px;font-size:13px;line-height:19px;color:#444;">CÔNG TY</div><div class="t" style="left:328px;top:734.5px;font-size:13px;line-height:19px;color:#444;">TNHH</div><div class="t" style="left:328px;top:753.5px;font-size:13px;line-height:19px;color:#444;">HYOSUNG</div><div class="t" style="left:328px;top:772.5px;font-size:13px;line-height:19px;color:#444;">ĐỒNG NAI</div><div class="t" style="left:412px;top:744.0px;font-size:13px;line-height:19px;color:#444;letter-spacing:0.28px;">12/11 21:00</div><div class="t" style="left:497px;top:744.0px;font-size:13px;line-height:19px;color:#444;">EGSU3108...</div><div class="t" style="left:576px;width:40px;text-align:center;top:744.0px;font-size:13px;line-height:19px;color:#444;">1</div><div class="t" style="left:622px;top:744.0px;font-size:13px;line-height:19px;color:#444;">20ft</div><div class="t" style="left:690px;top:744.0px;font-size:13px;line-height:19px;color:#444;">DC - Khô</div><div class="t" style="left:769px;width:85px;text-align:center;top:734.5px;font-size:13px;line-height:19px;color:#333;font-weight:bold;">(TV01)</div><div class="t" style="left:769px;width:85px;text-align:center;top:753.5px;font-size:13px;line-height:19px;color:#444;">60R-00683</div><div class="t" style="left:1115px;top:734.5px;font-size:13px;line-height:19px;color:#444;">Nguyễn Văn</div><div class="t" style="left:1115px;top:753.5px;font-size:13px;line-height:19px;color:#444;">Thao</div><div class="b" style="left:12px;top:794px;width:1183px;height:1px;background:#e0e0e0"></div><svg class="b" style="left:26px;top:804px" width="12" height="12" viewBox="0 0 12 12"><rect x="0" y="0" width="12" height="12" rx="2" fill="#8a8a8a"/><rect x="2.5" y="5" width="7" height="2" fill="#fff"/></svg><div class="t" style="left:50px;top:807.5px;font-size:13px;line-height:19px;color:#2a8a4c;font-weight:bold;letter-spacing:0.08px;">Mã TMS: 31605177437 (2 công việc)</div><svg class="b" style="left:275px;top:807px" width="63" height="21" viewBox="0 0 63 21">
<rect x="0" y="0" width="48" height="13" fill="#0f72c3"/>
<rect x="0" y="12.9" width="48" height="1.3" fill="#5a86ae"/>
<rect x="0.8" y="0.6" width="1.8" height="1.2" fill="#b8a040"/><rect x="45.4" y="0.6" width="1.8" height="1.2" fill="#8aa040"/>
<path d="M40 2L34 12.5" stroke="#6aa060" stroke-width="0.35" opacity="0.6"/>
<rect x="8.9" y="3.2" width="1.9" height="6.6" fill="#f2f7fc"/>
<path d="M15.2 3.2L11.8 6.5L15.2 9.8" fill="none" stroke="#f2f7fc" stroke-width="1.8"/>
<text x="17" y="7.9" font-family="Liberation Sans" font-size="4.6" font-weight="bold" fill="#d6e6f5" letter-spacing="1.1">ASPER</text>
<path d="M0 14.1h51.3v2.3H2.5z" fill="#1c1c1c"/>
<rect x="31" y="15.8" width="5" height="2" fill="#b0b0b0"/>
<rect x="42.8" y="15.8" width="7" height="2.2" fill="#c0c0c0"/>
<g fill="#2b2b2b"><circle cx="8" cy="17.6" r="2.5"/><circle cx="14" cy="17.6" r="2.5"/><circle cx="19.9" cy="17.6" r="2.5"/><circle cx="39.2" cy="17.6" r="2.5"/><circle cx="58.5" cy="17.6" r="2.5"/></g>
<g fill="#6a6a6a"><circle cx="8" cy="17.6" r="1"/><circle cx="14" cy="17.6" r="1"/><circle cx="19.9" cy="17.6" r="1"/><circle cx="39.2" cy="17.6" r="1"/><circle cx="58.5" cy="17.6" r="1"/></g>
<path d="M51.6 4.5q0-1.8 1.8-1.8h8.3q1.2 0 1.2 1.2v12h-11.3z" fill="#b3b3b3"/>
<path d="M56.8 4.2h6v5.2h-6z" fill="#2f5fb0"/>
<path d="M57.5 4.8h4.5v2.8h-4.5z" fill="#5a8ed8"/>
<path d="M54.2 4.5q1.5 4 5.8 8.3" fill="none" stroke="#f0b020" stroke-width="1.7"/>
</svg><div class="b" style="left:342px;top:803px;width:104px;height:32px;background:#f4f4f4;border:1px solid #e2e2e2;box-sizing:border-box;"></div><svg class="b" style="left:350px;top:814px" width="16" height="11" viewBox="0 0 16 11"><path d="M0.5 5.5C2.5 2 5 0.5 8 0.5s5.5 1.5 7.5 5c-2 3.5-4.5 5-7.5 5S2.5 9 0.5 5.5z" fill="#111"/><circle cx="8" cy="5.5" r="3" fill="#f4f4f4"/><circle cx="8" cy="5.5" r="1.6" fill="#111"/></svg><div class="t" style="left:374px;top:809.5px;font-size:12.5px;line-height:19px;color:#555;">Xem Mooc</div><div class="b" style="left:12px;top:843px;width:1183px;height:1px;background:#e0e0e0"></div><div class="b" style="left:43px;top:844px;width:1px;height:23px;background:#e4e4e4"></div><div class="t" style="left:328px;top:848.5px;font-size:13px;line-height:19px;color:#444;">CÔNG TY</div><div class="b" style="left:406px;top:275px;width:86px;height:26px;border:1px solid #6a9fd4;box-sizing:border-box"></div><div class="b" style="left:488px;top:295px;width:182px;height:56px;background:#fff;box-shadow:0 0 1px rgba(0,0,0,0.08)"></div><div class="t" style="left:529px;top:296.5px;font-size:12px;line-height:19px;color:#222;font-weight:bold;">Chức Năng</div><div class="b" style="left:488px;top:315px;width:182px;height:1px;background:#d8d8d8"></div><div class="b" style="left:499px;top:331px;width:11px;height:3px;background:#111"></div><div class="b" style="left:499px;top:336px;width:11px;height:3px;background:#111"></div><div class="t" style="left:524px;top:326.0px;font-size:12.8px;line-height:19px;color:#555;letter-spacing:0.09px;">Lập công việc đồng thời</div><div class="b" style="left:450px;top:295px;width:24px;height:24px;border-radius:50%;box-shadow:0 1px 2px rgba(0,0,0,0.3)"></div><svg class="b" style="left:450px;top:295px" width="24" height="24" viewBox="0 0 24 24"><circle cx="12" cy="12" r="12" fill="#e64646"/><path d="M12.3 4.9V19.1" stroke="#fff" stroke-width="2.3"/><path d="M12.6 5.2L8.4 8.6" stroke="#fff" stroke-width="1.9"/></svg><div class="b" style="left:666px;top:323px;width:24px;height:24px;border-radius:50%;box-shadow:0 1px 2px rgba(0,0,0,0.3)"></div><svg class="b" style="left:666px;top:323px" width="24" height="24" viewBox="0 0 24 24"><circle cx="12" cy="12" r="12" fill="#e64646"/><path d="M7.7 7.6C8.4 5.7 9.9 4.9 11.5 4.9C13.6 4.9 15.1 6.2 15.1 8.3C15.1 10.2 13.9 11.6 12 13.5L7.8 17.8H16" fill="none" stroke="#fff" stroke-width="2"/></svg><div class="b" style="left:1195px;top:203px;width:10px;height:664px;background:#e2e2e2;border-radius:5px"></div><div class="b" style="left:1195px;top:203px;width:10px;height:320px;background:#aaaaaa;border-radius:5px"></div><div class="b" style="left:1206px;top:412px;width:10px;height:48px;background:#dedede"></div><svg class="b" style="left:1208px;top:431px" width="6" height="9" viewBox="0 0 6 9"><path d="M0.5 0.5L5.5 4.5L0.5 8.5z" fill="#888"/></svg><div class="b" style="left:1216px;top:47px;width:451px;height:821px;border:1px solid #cfcfcf;box-sizing:border-box;background:#fff"></div><div class="b" style="left:1225px;top:54px;width:82px;height:32px;background:#f4f4f4;border:1px solid #e2e2e2;box-sizing:border-box;"></div><svg class="b" style="left:1235px;top:64px" width="12" height="12" viewBox="0 0 12 12"><rect x="0" y="0" width="12" height="12" rx="1.5" fill="#000"/><path d="M1.8 6.2L4.6 8.9L10.2 3.4" fill="none" stroke="#fff" stroke-width="1.3"/></svg><div class="t" style="left:1257px;top:60.5px;font-size:12.5px;line-height:19px;color:#555;">Lọc</div><svg class="b" style="left:1286px;top:68px" width="10" height="6" viewBox="0 0 10 6"><path d="M0 0h10L5 5.5z" fill="#555"/></svg><div class="b" style="left:1316px;top:54px;width:342px;height:32px;border:1px solid #cfcfcf;box-sizing:border-box;background:#fff"></div><svg class="b" style="left:1603px;top:66px" width="11" height="10" viewBox="0 0 11 10"><path d="M1.6 1.4l7.8 7.2M9.4 1.4l-7.8 7.2" stroke="#888" stroke-width="3.1" stroke-linecap="round"/></svg><svg class="b" style="left:1633px;top:63px" width="15" height="15" viewBox="0 0 15 15"><circle cx="6.4" cy="6.4" r="5" fill="none" stroke="#888" stroke-width="2.3"/><path d="M10 10l3.8 3.8" stroke="#888" stroke-width="2.3" stroke-linecap="round"/></svg><div class="b" style="left:1217px;top:92px;width:449px;height:1px;background:#d4d4d4"></div><div class="b" style="left:1248px;top:93px;width:1px;height:32px;background:#d6d6d6"></div><div class="b" style="left:1288px;top:93px;width:1px;height:32px;background:#d6d6d6"></div><div class="b" style="left:1615px;top:93px;width:1px;height:32px;background:#d6d6d6"></div><div class="b" style="left:1217px;top:125px;width:449px;height:2px;background:#cfcfcf"></div><div class="t" style="left:1300px;top:99.5px;font-size:13px;line-height:19px;color:#333;font-weight:bold;">Chuyến</div><div class="b" style="left:1254px;top:127px;width:30px;height:5px;background:#f4f4f4;border:1px solid #e8e8e8;border-top:none;box-sizing:border-box"></div><div class="b" style="left:1621px;top:127px;width:30px;height:5px;background:#f4f4f4;border:1px solid #e8e8e8;border-top:none;box-sizing:border-box"></div><div class="b" style="left:1248px;top:127px;width:1px;height:739px;background:#e8e8e8"></div><div class="t" style="left:1297px;top:131.5px;font-size:11px;line-height:19px;color:#008000;font-weight:bold;letter-spacing:0.2px;">- 60C-13765</div><div class="t" style="left:1385px;top:126.5px;font-size:11px;line-height:19px;color:#555;letter-spacing:-0.2px;">NGUYỄN XUÂN HƯNG</div><div class="b" style="left:1217px;top:155px;width:439px;height:1px;background:#e0e0e0"></div><div class="b" style="left:1217px;top:156px;width:439px;height:75px;background:#f5f5f5"></div><div class="b" style="left:1248px;top:156px;width:1px;height:75px;background:#e8e8e8"></div><svg class="b" style="left:1224px;top:188px" width="12" height="12" viewBox="0 0 12 12"><rect x="0" y="0" width="12" height="12" rx="2" fill="#8a8a8a"/><rect x="2.5" y="5" width="7" height="2" fill="#fff"/><rect x="5" y="2.5" width="2" height="7" fill="#fff"/></svg><div class="b" style="left:1254px;top:177px;width:30px;height:32px;background:#f6f6f6;border:1px solid #e6e6e6;box-sizing:border-box;"></div><svg class="b" style="left:1263px;top:187px" width="12" height="12" viewBox="0 0 12 12"><path d="M0 1a1 1 0 0 1 1-1h8.6l2.4 2.4v8.6a1 1 0 0 1-1 1h-10a1 1 0 0 1-1-1z" fill="#808080"/><rect x="1.1" y="1.3" width="7.6" height="2.6" fill="#f6f6f6"/><circle cx="5.8" cy="8.1" r="2.3" fill="#f6f6f6"/></svg><svg class="b" style="left:1297px;top:163px" width="58" height="20" viewBox="0 0 63 21">
<rect x="0" y="0" width="48" height="13" fill="#0f72c3"/>
<rect x="0" y="12.9" width="48" height="1.3" fill="#5a86ae"/>
<rect x="0.8" y="0.6" width="1.8" height="1.2" fill="#b8a040"/><rect x="45.4" y="0.6" width="1.8" height="1.2" fill="#8aa040"/>
<path d="M40 2L34 12.5" stroke="#6aa060" stroke-width="0.35" opacity="0.6"/>
<rect x="8.9" y="3.2" width="1.9" height="6.6" fill="#f2f7fc"/>
<path d="M15.2 3.2L11.8 6.5L15.2 9.8" fill="none" stroke="#f2f7fc" stroke-width="1.8"/>
<text x="17" y="7.9" font-family="Liberation Sans" font-size="4.6" font-weight="bold" fill="#d6e6f5" letter-spacing="1.1">ASPER</text>
<path d="M0 14.1h51.3v2.3H2.5z" fill="#1c1c1c"/>
<rect x="31" y="15.8" width="5" height="2" fill="#b0b0b0"/>
<rect x="42.8" y="15.8" width="7" height="2.2" fill="#c0c0c0"/>
<g fill="#2b2b2b"><circle cx="8" cy="17.6" r="2.5"/><circle cx="14" cy="17.6" r="2.5"/><circle cx="19.9" cy="17.6" r="2.5"/><circle cx="39.2" cy="17.6" r="2.5"/><circle cx="58.5" cy="17.6" r="2.5"/></g>
<g fill="#6a6a6a"><circle cx="8" cy="17.6" r="1"/><circle cx="14" cy="17.6" r="1"/><circle cx="19.9" cy="17.6" r="1"/><circle cx="39.2" cy="17.6" r="1"/><circle cx="58.5" cy="17.6" r="1"/></g>
<path d="M51.6 4.5q0-1.8 1.8-1.8h8.3q1.2 0 1.2 1.2v12h-11.3z" fill="#b3b3b3"/>
<path d="M56.8 4.2h6v5.2h-6z" fill="#2f5fb0"/>
<path d="M57.5 4.8h4.5v2.8h-4.5z" fill="#5a8ed8"/>
<path d="M54.2 4.5q1.5 4 5.8 8.3" fill="none" stroke="#f0b020" stroke-width="1.7"/>
</svg><div class="t" style="left:1297px;top:188.5px;font-size:11px;line-height:19px;color:#444;font-weight:bold;letter-spacing:0.2px;">Xe Đầu Kéo</div><div class="t" style="left:1297px;top:207.5px;font-size:11px;line-height:19px;color:#008000;font-weight:bold;letter-spacing:0.2px;">- 51D-04939</div><div class="t" style="left:1385px;top:189.5px;font-size:12px;line-height:19px;color:#555;letter-spacing:-0.38px;">Ôn Văn Phong</div><div class="t" style="left:1601px;top:185.5px;font-size:12px;line-height:19px;color:#333;font-weight:bold;">0</div><div class="b" style="left:1621px;top:177px;width:30px;height:32px;background:#f6f6f6;border:1px solid #e6e6e6;box-sizing:border-box;"></div><svg class="b" style="left:1628px;top:185px" width="16" height="16" viewBox="0 0 16 16"><circle cx="8" cy="8" r="6.1" fill="none" stroke="#fb8c00" stroke-width="1.7"/><rect x="5.9" y="5.3" width="1.5" height="5.3" fill="#fb8c00"/><rect x="8.6" y="5.3" width="1.5" height="5.3" fill="#fb8c00"/></svg><div class="b" style="left:1217px;top:231px;width:439px;height:1px;background:#e0e0e0"></div><svg class="b" style="left:1224px;top:264px" width="12" height="12" viewBox="0 0 12 12"><rect x="0" y="0" width="12" height="12" rx="2" fill="#8a8a8a"/><rect x="2.5" y="5" width="7" height="2" fill="#fff"/></svg><div class="b" style="left:1254px;top:253px;width:30px;height:32px;background:#f6f6f6;border:1px solid #e6e6e6;box-sizing:border-box;"></div><svg class="b" style="left:1263px;top:263px" width="12" height="12" viewBox="0 0 12 12"><path d="M0 1a1 1 0 0 1 1-1h8.6l2.4 2.4v8.6a1 1 0 0 1-1 1h-10a1 1 0 0 1-1-1z" fill="#808080"/><rect x="1.1" y="1.3" width="7.6" height="2.6" fill="#f6f6f6"/><circle cx="5.8" cy="8.1" r="2.3" fill="#f6f6f6"/></svg><svg class="b" style="left:1297px;top:239px" width="58" height="20" viewBox="0 0 63 21">
<rect x="0" y="0" width="48" height="13" fill="#0f72c3"/>
<rect x="0" y="12.9" width="48" height="1.3" fill="#5a86ae"/>
<rect x="0.8" y="0.6" width="1.8" height="1.2" fill="#b8a040"/><rect x="45.4" y="0.6" width="1.8" height="1.2" fill="#8aa040"/>
<path d="M40 2L34 12.5" stroke="#6aa060" stroke-width="0.35" opacity="0.6"/>
<rect x="8.9" y="3.2" width="1.9" height="6.6" fill="#f2f7fc"/>
<path d="M15.2 3.2L11.8 6.5L15.2 9.8" fill="none" stroke="#f2f7fc" stroke-width="1.8"/>
<text x="17" y="7.9" font-family="Liberation Sans" font-size="4.6" font-weight="bold" fill="#d6e6f5" letter-spacing="1.1">ASPER</text>
<path d="M0 14.1h51.3v2.3H2.5z" fill="#1c1c1c"/>
<rect x="31" y="15.8" width="5" height="2" fill="#b0b0b0"/>
<rect x="42.8" y="15.8" width="7" height="2.2" fill="#c0c0c0"/>
<g fill="#2b2b2b"><circle cx="8" cy="17.6" r="2.5"/><circle cx="14" cy="17.6" r="2.5"/><circle cx="19.9" cy="17.6" r="2.5"/><circle cx="39.2" cy="17.6" r="2.5"/><circle cx="58.5" cy="17.6" r="2.5"/></g>
<g fill="#6a6a6a"><circle cx="8" cy="17.6" r="1"/><circle cx="14" cy="17.6" r="1"/><circle cx="19.9" cy="17.6" r="1"/><circle cx="39.2" cy="17.6" r="1"/><circle cx="58.5" cy="17.6" r="1"/></g>
<path d="M51.6 4.5q0-1.8 1.8-1.8h8.3q1.2 0 1.2 1.2v12h-11.3z" fill="#b3b3b3"/>
<path d="M56.8 4.2h6v5.2h-6z" fill="#2f5fb0"/>
<path d="M57.5 4.8h4.5v2.8h-4.5z" fill="#5a8ed8"/>
<path d="M54.2 4.5q1.5 4 5.8 8.3" fill="none" stroke="#f0b020" stroke-width="1.7"/>
</svg><div class="t" style="left:1297px;top:264.5px;font-size:11px;line-height:19px;color:#444;font-weight:bold;letter-spacing:0.2px;">Xe Đầu Kéo</div><div class="t" style="left:1297px;top:283.5px;font-size:11px;line-height:19px;color:#008000;font-weight:bold;letter-spacing:0.2px;">- 51D-04962</div><div class="t" style="left:1385px;top:244.5px;font-size:11.7px;line-height:19px;color:#555;letter-spacing:0.05px;">12/11 05:00</div><svg class="b" style="left:1449px;top:251px" width="8" height="7" viewBox="0 0 8 7"><path d="M0.9 0.8L3.3 3.5L0.9 6.2M4.5 0.8L6.9 3.5L4.5 6.2" fill="none" stroke="#333" stroke-width="1.7"/></svg><div class="t" style="left:1460px;top:244.5px;font-size:11.7px;line-height:19px;color:#555;letter-spacing:0.05px;">13/11 16:30</div><div class="t" style="left:1385px;top:278.5px;font-size:11.5px;line-height:19px;color:#555;letter-spacing:0.08px;">Nguyễn Thanh Liêm</div><div class="t" style="left:1601px;top:261.5px;font-size:12px;line-height:19px;color:#333;font-weight:bold;">7</div><div class="b" style="left:1621px;top:253px;width:30px;height:32px;background:#f6f6f6;border:1px solid #e6e6e6;box-sizing:border-box;"></div><svg class="b" style="left:1628px;top:261px" width="16" height="16" viewBox="0 0 16 16"><circle cx="8" cy="8" r="6.1" fill="none" stroke="#fb8c00" stroke-width="1.7"/><rect x="5.9" y="5.3" width="1.5" height="5.3" fill="#fb8c00"/><rect x="8.6" y="5.3" width="1.5" height="5.3" fill="#fb8c00"/></svg><div class="b" style="left:1259px;top:312px;width:387px;height:560px;border:1px solid #d4d4d4;border-bottom:none;box-sizing:border-box;background:#fff"></div><div class="b" style="left:1268px;top:319px;width:32px;height:32px;background:#f4f4f4;border:1px solid #e2e2e2;box-sizing:border-box;"></div><svg class="b" style="left:1277.5px;top:328.5px" width="13" height="13" viewBox="0 0 13 13"><path d="M7.8 1.2H2.2a1 1 0 0 0-1 1v9.2a1 1 0 0 0 1 1h9.2a1 1 0 0 0 1-1V5.6" fill="none" stroke="#222" stroke-width="1.4"/><path d="M8.6 0.3h4v4z" fill="#222"/><path d="M11.6 1.3L4.5 8.4" stroke="#222" stroke-width="1.4"/></svg><div class="b" style="left:1308px;top:319px;width:32px;height:32px;background:#f4f4f4;border:1px solid #e2e2e2;box-sizing:border-box;"></div><svg class="b" style="left:1319.5px;top:329.5px" width="10" height="13" viewBox="0 0 10 13"><path d="M2.5 0.3L0.3 2.6h4.4z" fill="#222"/><rect x="1.8" y="2.3" width="1.4" height="5.5" fill="#222"/><path d="M6.5 12.3L4.3 10h4.4z" fill="#222"/><rect x="5.8" y="4.5" width="1.4" height="5.8" fill="#222"/></svg><div class="b" style="left:1348px;top:319px;width:32px;height:32px;background:#f4f4f4;border:1px solid #e2e2e2;box-sizing:border-box;"></div><svg class="b" style="left:1356px;top:330px" width="16" height="11" viewBox="0 0 16 11"><path d="M0.5 5.5C2.5 2 5 0.5 8 0.5s5.5 1.5 7.5 5c-2 3.5-4.5 5-7.5 5S2.5 9 0.5 5.5z" fill="#111"/><circle cx="8" cy="5.5" r="3" fill="#f4f4f4"/><circle cx="8" cy="5.5" r="1.6" fill="#111"/></svg><div class="b" style="left:1260px;top:357px;width:385px;height:1px;background:#d4d4d4"></div><div class="b" style="left:1299px;top:358px;width:1px;height:51px;background:#d6d6d6"></div><div class="b" style="left:1406px;top:358px;width:1px;height:51px;background:#d6d6d6"></div><div class="b" style="left:1474px;top:358px;width:1px;height:51px;background:#d6d6d6"></div><div class="b" style="left:1535px;top:358px;width:1px;height:51px;background:#d6d6d6"></div><div class="b" style="left:1604px;top:358px;width:1px;height:51px;background:#d6d6d6"></div><div class="b" style="left:1260px;top:409px;width:385px;height:2px;background:#cfcfcf"></div><div class="t" style="left:1260px;width:39px;text-align:center;top:374.0px;font-size:13px;line-height:19px;color:#333;font-weight:bold;">#</div><div class="t" style="left:1310px;top:374.0px;font-size:13px;line-height:19px;color:#333;font-weight:bold;">Mã TMS</div><div class="t" style="left:1417px;top:365.0px;font-size:13px;line-height:19px;color:#333;font-weight:bold;">Công</div><div class="t" style="left:1417px;top:384.0px;font-size:13px;line-height:19px;color:#333;font-weight:bold;">việc</div><div class="t" style="left:1485px;top:374.0px;font-size:13px;line-height:19px;color:#333;font-weight:bold;">Ngày</div><div class="t" style="left:1553px;top:374.0px;font-size:13px;line-height:19px;color:#333;font-weight:bold;">Mooc</div><div class="b" style="left:1299px;top:411px;width:1px;height:91px;background:#e4e4e4"></div><div class="t" style="left:1260px;width:39px;text-align:center;top:448.0px;font-size:13px;line-height:19px;color:#444;">1</div><div class="t" style="left:1305px;top:438.0px;font-size:13px;line-height:19px;color:#444;letter-spacing:0.2px;">31605177344</div><div class="b" style="left:1305px;top:458.0px;width:97px;height:20px;border-radius:4px;background-color:#4aad4f;background-image:linear-gradient(45deg,rgba(255,255,255,.15) 25%,transparent 25%,transparent 50%,rgba(255,255,255,.15) 50%,rgba(255,255,255,.15) 75%,transparent 75%,transparent);background-size:40px 40px;background-position:-14px 0"></div><svg class="b" style="left:1347.0px;top:461.0px" width="13" height="14" viewBox="0 0 13 14"><path d="M0 2.5a1 1 0 0 1 1-1h11a1 1 0 0 1 1 1v10.5a1 1 0 0 1-1 1h-11a1 1 0 0 1-1-1z" fill="#fff"/><rect x="4.5" y="0.3" width="4" height="2.5" rx="0.8" fill="#fff"/><circle cx="6.5" cy="2.4" r="0.7" fill="#4aad4f"/><circle cx="6.5" cy="6.2" r="2" fill="#4aad4f"/><path d="M2.8 11.6a3.7 2.4 0 0 1 7.4 0z" fill="#4aad4f"/></svg><div class="t" style="left:1412px;top:448.0px;font-size:13px;line-height:19px;color:#444;">Lấy Rỗng</div><div class="t" style="left:1480px;top:438.5px;font-size:13px;line-height:19px;color:#444;letter-spacing:0.2px;">12/11</div><div class="t" style="left:1480px;top:457.5px;font-size:13px;line-height:19px;color:#444;letter-spacing:0.2px;">19:00</div><div class="t" style="left:1535px;width:69px;text-align:center;top:429.0px;font-size:13px;line-height:19px;color:#333;font-weight:bold;">(TV39)</div><div class="t" style="left:1535px;width:69px;text-align:center;top:448.0px;font-size:13px;line-height:19px;color:#444;">60R-</div><div class="t" style="left:1535px;width:69px;text-align:center;top:467.0px;font-size:13px;line-height:19px;color:#444;">00802</div><div class="b" style="left:1260px;top:502px;width:385px;height:1px;background:#e0e0e0"></div><div class="b" style="left:1260px;top:503px;width:385px;height:90px;background:#f5f5f5"></div><div class="b" style="left:1299px;top:503px;width:1px;height:90px;background:#e4e4e4"></div><div class="t" style="left:1260px;width:39px;text-align:center;top:539.5px;font-size:13px;line-height:19px;color:#444;">2</div><div class="t" style="left:1305px;top:529.5px;font-size:13px;line-height:19px;color:#444;letter-spacing:0.2px;">31605177344</div><div class="b" style="left:1305px;top:549.5px;width:97px;height:20px;border-radius:4px;background-color:#4aad4f;background-image:linear-gradient(45deg,rgba(255,255,255,.15) 25%,transparent 25%,transparent 50%,rgba(255,255,255,.15) 50%,rgba(255,255,255,.15) 75%,transparent 75%,transparent);background-size:40px 40px;background-position:-14px 0"></div><svg class="b" style="left:1347.0px;top:552.5px" width="13" height="14" viewBox="0 0 13 14"><path d="M0 2.5a1 1 0 0 1 1-1h11a1 1 0 0 1 1 1v10.5a1 1 0 0 1-1 1h-11a1 1 0 0 1-1-1z" fill="#fff"/><rect x="4.5" y="0.3" width="4" height="2.5" rx="0.8" fill="#fff"/><circle cx="6.5" cy="2.4" r="0.7" fill="#4aad4f"/><circle cx="6.5" cy="6.2" r="2" fill="#4aad4f"/><path d="M2.8 11.6a3.7 2.4 0 0 1 7.4 0z" fill="#4aad4f"/></svg><div class="t" style="left:1412px;top:539.5px;font-size:13px;line-height:19px;color:#444;">Trả Rỗng</div><div class="t" style="left:1480px;top:530.0px;font-size:13px;line-height:19px;color:#444;letter-spacing:0.2px;">12/11</div><div class="t" style="left:1480px;top:549.0px;font-size:13px;line-height:19px;color:#444;letter-spacing:0.2px;">20:30</div><div class="t" style="left:1535px;width:69px;text-align:center;top:520.5px;font-size:13px;line-height:19px;color:#333;font-weight:bold;">(TV39)</div><div class="t" style="left:1535px;width:69px;text-align:center;top:539.5px;font-size:13px;line-height:19px;color:#444;">60R-</div><div class="t" style="left:1535px;width:69px;text-align:center;top:558.5px;font-size:13px;line-height:19px;color:#444;">00802</div><div class="b" style="left:1260px;top:593px;width:385px;height:1px;background:#e0e0e0"></div><div class="b" style="left:1299px;top:594px;width:1px;height:90px;background:#e4e4e4"></div><div class="t" style="left:1260px;width:39px;text-align:center;top:630.5px;font-size:13px;line-height:19px;color:#444;">3</div><div class="t" style="left:1305px;top:620.5px;font-size:13px;line-height:19px;color:#444;letter-spacing:0.2px;">31605200533</div><div class="b" style="left:1305px;top:640.5px;width:97px;height:20px;border-radius:4px;background-color:#4aad4f;background-image:linear-gradient(45deg,rgba(255,255,255,.15) 25%,transparent 25%,transparent 50%,rgba(255,255,255,.15) 50%,rgba(255,255,255,.15) 75%,transparent 75%,transparent);background-size:40px 40px;background-position:-14px 0"></div><svg class="b" style="left:1347.0px;top:643.5px" width="13" height="14" viewBox="0 0 13 14"><path d="M0 2.5a1 1 0 0 1 1-1h11a1 1 0 0 1 1 1v10.5a1 1 0 0 1-1 1h-11a1 1 0 0 1-1-1z" fill="#fff"/><rect x="4.5" y="0.3" width="4" height="2.5" rx="0.8" fill="#fff"/><circle cx="6.5" cy="2.4" r="0.7" fill="#4aad4f"/><circle cx="6.5" cy="6.2" r="2" fill="#4aad4f"/><path d="M2.8 11.6a3.7 2.4 0 0 1 7.4 0z" fill="#4aad4f"/></svg><div class="t" style="left:1412px;top:621.0px;font-size:13px;line-height:19px;color:#444;">Lấy Cont</div><div class="t" style="left:1412px;top:640.0px;font-size:13px;line-height:19px;color:#444;">Hàng</div><div class="t" style="left:1480px;top:621.0px;font-size:13px;line-height:19px;color:#444;letter-spacing:0.2px;">13/11</div><div class="t" style="left:1480px;top:640.0px;font-size:13px;line-height:19px;color:#444;letter-spacing:0.2px;">12:00</div><div class="t" style="left:1535px;width:69px;text-align:center;top:611.5px;font-size:13px;line-height:19px;color:#333;font-weight:bold;">(TV39)</div><div class="t" style="left:1535px;width:69px;text-align:center;top:630.5px;font-size:13px;line-height:19px;color:#444;">60R-</div><div class="t" style="left:1535px;width:69px;text-align:center;top:649.5px;font-size:13px;line-height:19px;color:#444;">00802</div><div class="b" style="left:1260px;top:684px;width:385px;height:1px;background:#e0e0e0"></div><div class="b" style="left:1260px;top:685px;width:385px;height:90px;background:#f5f5f5"></div><div class="b" style="left:1299px;top:685px;width:1px;height:90px;background:#e4e4e4"></div><div class="t" style="left:1260px;width:39px;text-align:center;top:721.5px;font-size:13px;line-height:19px;color:#444;">4</div><div class="t" style="left:1305px;top:711.5px;font-size:13px;line-height:19px;color:#444;letter-spacing:0.2px;">31605200533</div><div class="b" style="left:1305px;top:731.5px;width:97px;height:20px;border-radius:4px;background-color:#4aad4f;background-image:linear-gradient(45deg,rgba(255,255,255,.15) 25%,transparent 25%,transparent 50%,rgba(255,255,255,.15) 50%,rgba(255,255,255,.15) 75%,transparent 75%,transparent);background-size:40px 40px;background-position:-14px 0"></div><svg class="b" style="left:1347.0px;top:734.5px" width="13" height="14" viewBox="0 0 13 14"><path d="M0 2.5a1 1 0 0 1 1-1h11a1 1 0 0 1 1 1v10.5a1 1 0 0 1-1 1h-11a1 1 0 0 1-1-1z" fill="#fff"/><rect x="4.5" y="0.3" width="4" height="2.5" rx="0.8" fill="#fff"/><circle cx="6.5" cy="2.4" r="0.7" fill="#4aad4f"/><circle cx="6.5" cy="6.2" r="2" fill="#4aad4f"/><path d="M2.8 11.6a3.7 2.4 0 0 1 7.4 0z" fill="#4aad4f"/></svg><div class="t" style="left:1412px;top:702.5px;font-size:13px;line-height:19px;color:#444;">Giao</div><div class="t" style="left:1412px;top:721.5px;font-size:13px;line-height:19px;color:#444;">Cont</div><div class="t" style="left:1412px;top:740.5px;font-size:13px;line-height:19px;color:#444;">Hàng</div><div class="t" style="left:1480px;top:712.0px;font-size:13px;line-height:19px;color:#444;letter-spacing:0.2px;">13/11</div><div class="t" style="left:1480px;top:731.0px;font-size:13px;line-height:19px;color:#444;letter-spacing:0.2px;">14:00</div><div class="t" style="left:1535px;width:69px;text-align:center;top:702.5px;font-size:13px;line-height:19px;color:#333;font-weight:bold;">(TV39)</div><div class="t" style="left:1535px;width:69px;text-align:center;top:721.5px;font-size:13px;line-height:19px;color:#444;">60R-</div><div class="t" style="left:1535px;width:69px;text-align:center;top:740.5px;font-size:13px;line-height:19px;color:#444;">00802</div><div class="b" style="left:1260px;top:775px;width:385px;height:1px;background:#e0e0e0"></div><div class="b" style="left:1299px;top:776px;width:1px;height:90px;background:#e4e4e4"></div><div class="t" style="left:1260px;width:39px;text-align:center;top:812.5px;font-size:13px;line-height:19px;color:#444;">5</div><div class="t" style="left:1305px;top:802.5px;font-size:13px;line-height:19px;color:#444;letter-spacing:0.2px;">31605200533</div><div class="b" style="left:1305px;top:822.5px;width:97px;height:20px;border-radius:4px;background-color:#4aad4f;background-image:linear-gradient(45deg,rgba(255,255,255,.15) 25%,transparent 25%,transparent 50%,rgba(255,255,255,.15) 50%,rgba(255,255,255,.15) 75%,transparent 75%,transparent);background-size:40px 40px;background-position:-14px 0"></div><svg class="b" style="left:1347.0px;top:825.5px" width="13" height="14" viewBox="0 0 13 14"><path d="M0 2.5a1 1 0 0 1 1-1h11a1 1 0 0 1 1 1v10.5a1 1 0 0 1-1 1h-11a1 1 0 0 1-1-1z" fill="#fff"/><rect x="4.5" y="0.3" width="4" height="2.5" rx="0.8" fill="#fff"/><circle cx="6.5" cy="2.4" r="0.7" fill="#4aad4f"/><circle cx="6.5" cy="6.2" r="2" fill="#4aad4f"/><path d="M2.8 11.6a3.7 2.4 0 0 1 7.4 0z" fill="#4aad4f"/></svg><div class="t" style="left:1412px;top:812.5px;font-size:13px;line-height:19px;color:#444;">Lấy Rỗng</div><div class="t" style="left:1480px;top:803.0px;font-size:13px;line-height:19px;color:#444;letter-spacing:0.2px;">13/11</div><div class="t" style="left:1480px;top:822.0px;font-size:13px;line-height:19px;color:#444;letter-spacing:0.2px;">15:00</div><div class="t" style="left:1535px;width:69px;text-align:center;top:793.5px;font-size:13px;line-height:19px;color:#333;font-weight:bold;">(TV39)</div><div class="t" style="left:1535px;width:69px;text-align:center;top:812.5px;font-size:13px;line-height:19px;color:#444;">60R-</div><div class="t" style="left:1535px;width:69px;text-align:center;top:831.5px;font-size:13px;line-height:19px;color:#444;">00802</div><div class="b" style="left:1260px;top:866px;width:385px;height:1px;background:#e0e0e0"></div><div class="b" style="left:1656px;top:127px;width:10px;height:740px;background:#e2e2e2;border-radius:5px"></div><div class="b" style="left:1656px;top:190px;width:10px;height:232px;background:#aaaaaa;border-radius:5px"></div><div class="b" style="left:11px;top:867px;width:1195px;height:1px;background:#cfcfcf"></div><div class="b" style="left:1216px;top:867px;width:451px;height:1px;background:#cfcfcf"></div><div class="b" style="left:0px;top:868px;width:1670px;height:5px;background:#fff"></div><div class="b" style="left:0px;top:0px;width:1670px;height:873px;box-shadow:inset 0 4px 4px -2px rgba(0,0,0,0.4), inset 6px 0 6px -4px rgba(0,0,0,0.12), inset -5px 0 4px -2px rgba(0,0,0,0.22), inset 0 -4px 4px -2px rgba(0,0,0,0.05);pointer-events:none"></div>
</body></html>
